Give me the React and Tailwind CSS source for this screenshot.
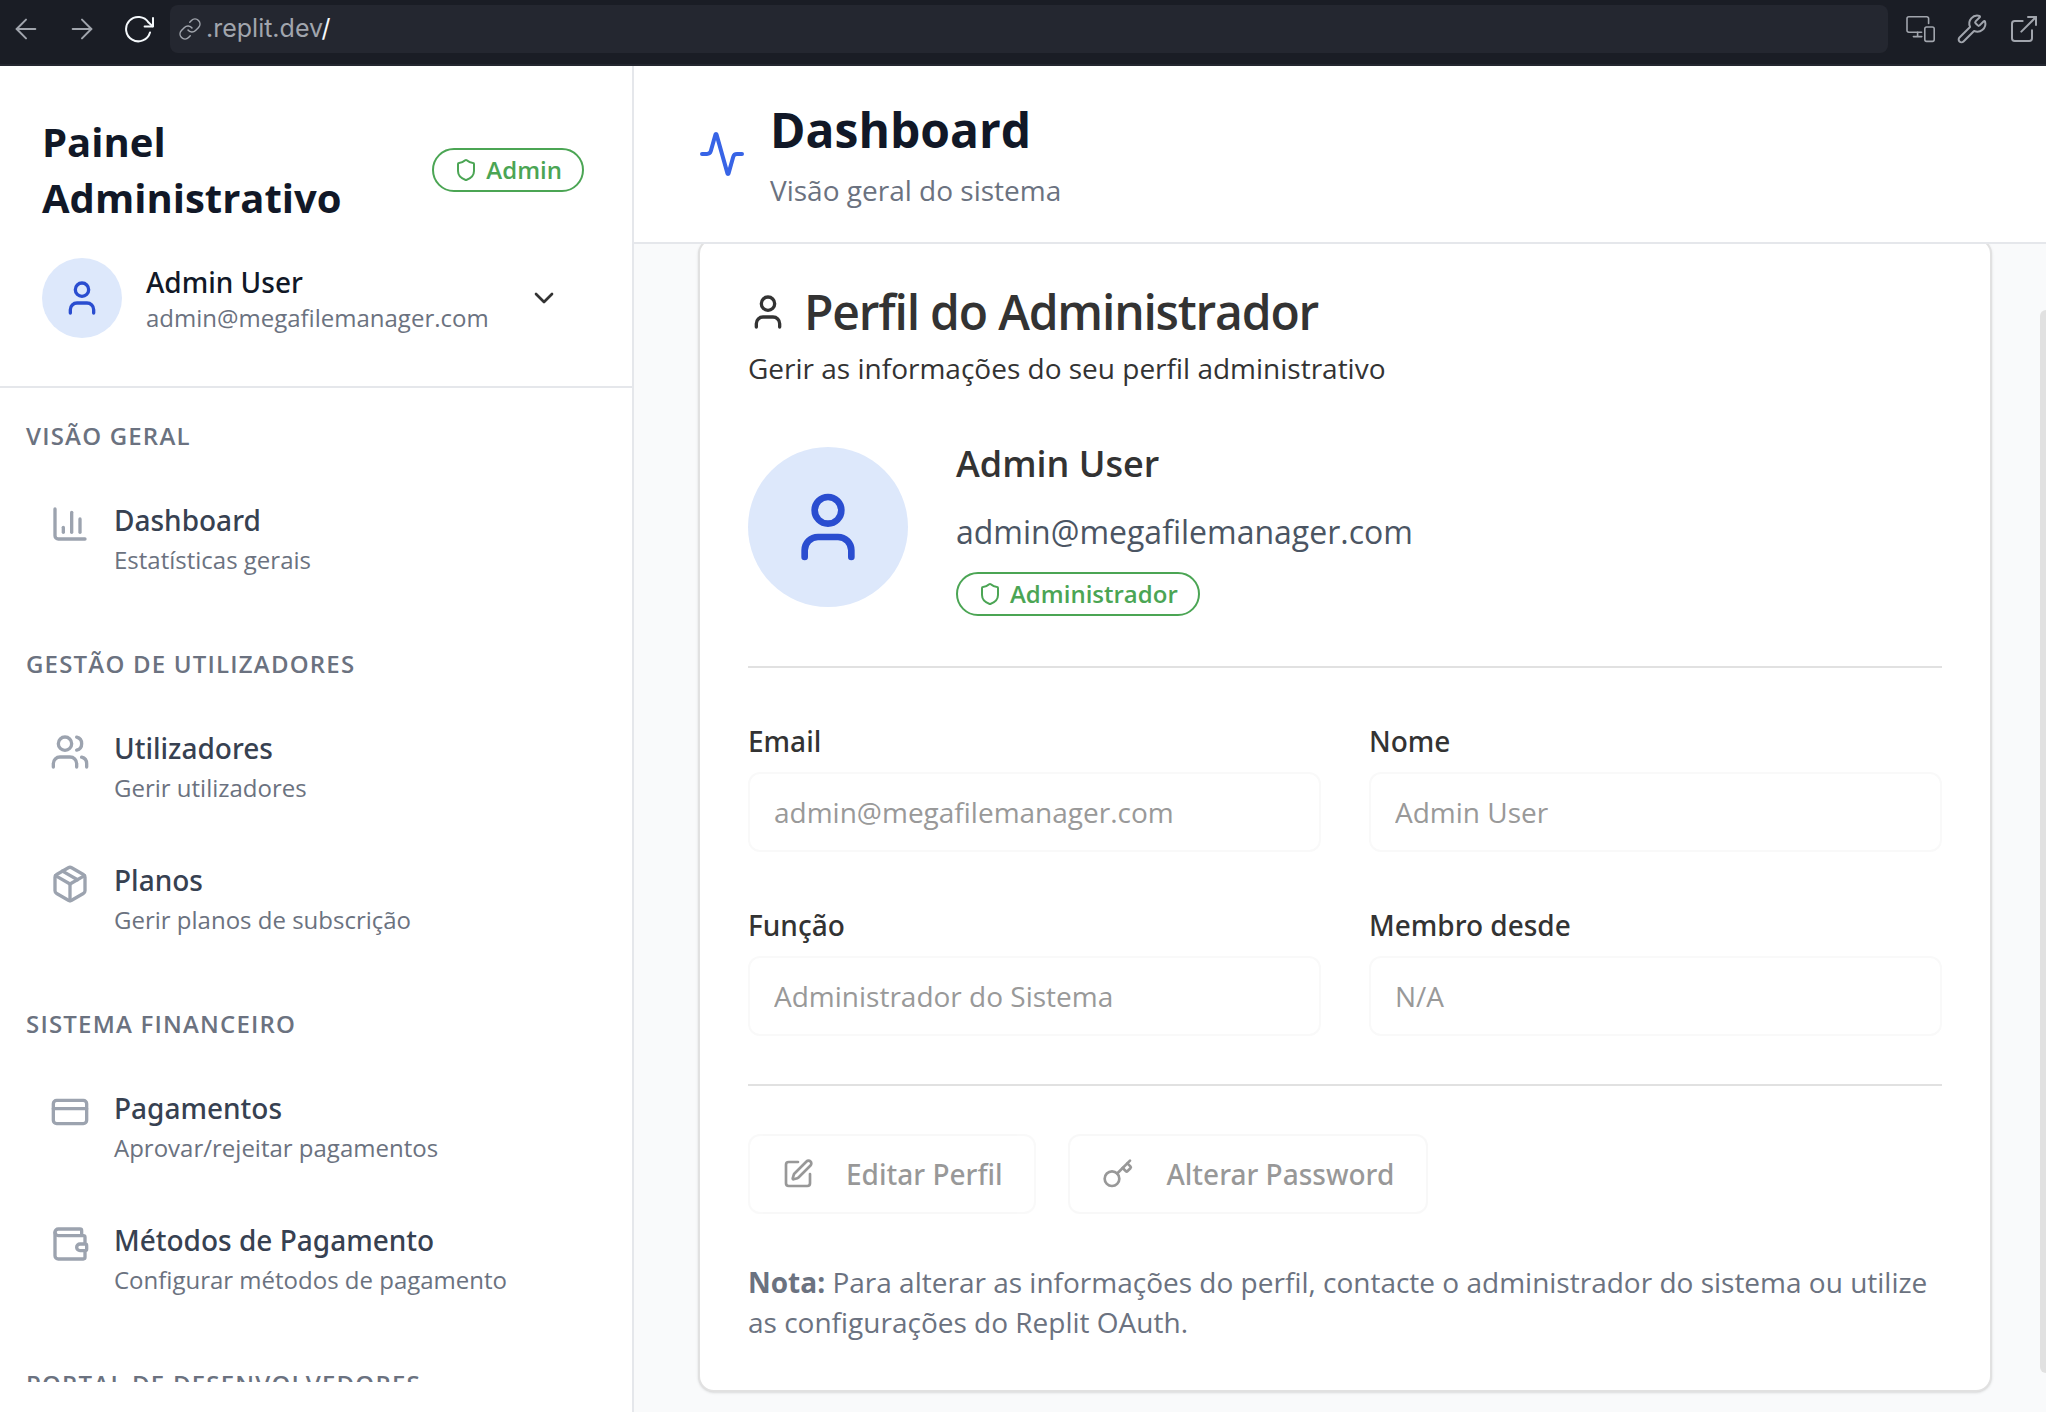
import {
  Activity,
  ArrowLeft,
  ArrowRight,
  ChartColumn,
  ChevronDown,
  CreditCard,
  ExternalLink,
  Key,
  Link,
  Package,
  Shield,
  SquarePen,
  User,
  Users,
  Wallet,
  Wrench,
} from "lucide-react";

const sections = [
  {
    title: "VISÃO GERAL",
    items: [{ icon: ChartColumn, label: "Dashboard", description: "Estatísticas gerais" }],
  },
  {
    title: "GESTÃO DE UTILIZADORES",
    items: [
      { icon: Users, label: "Utilizadores", description: "Gerir utilizadores" },
      { icon: Package, label: "Planos", description: "Gerir planos de subscrição" },
    ],
  },
  {
    title: "SISTEMA FINANCEIRO",
    items: [
      { icon: CreditCard, label: "Pagamentos", description: "Aprovar/rejeitar pagamentos" },
      { icon: Wallet, label: "Métodos de Pagamento", description: "Configurar métodos de pagamento" },
    ],
  },
  { title: "PORTAL DE DESENVOLVEDORES", items: [] },
];

const fields = [
  { id: "email", label: "Email", value: "admin@megafilemanager.com" },
  { id: "nome", label: "Nome", value: "Admin User" },
  { id: "funcao", label: "Função", value: "Administrador do Sistema" },
  { id: "membro", label: "Membro desde", value: "N/A" },
];

function ReloadIcon() {
  return (
    <svg
      viewBox="0 0 32 32"
      className="size-8"
      fill="none"
      stroke="currentColor"
      strokeWidth="2"
      strokeLinecap="round"
      strokeLinejoin="round"
      aria-hidden="true"
    >
      <path d="M28 19.5A12.2 12.2 0 1 1 26.6 9.6L30.6 13.2" />
      <path d="M31 5V13.4H22.6" />
    </svg>
  );
}

function DevicesIcon() {
  return (
    <svg
      viewBox="0 0 32 32"
      className="size-8"
      fill="none"
      stroke="currentColor"
      strokeWidth="1.6"
      strokeLinecap="round"
      strokeLinejoin="round"
      aria-hidden="true"
    >
      <path d="M24.6 10.4V5.6a1.8 1.8 0 0 0-1.8-1.8H4.8A1.8 1.8 0 0 0 3 5.6v11.8a1.8 1.8 0 0 0 1.8 1.8H17.6" />
      <path d="M13.6 19.2v4.4M9.4 23.6h8.4" />
      <rect x="20.8" y="14" width="9.4" height="14.4" rx="1.8" />
    </svg>
  );
}

function BrowserBar() {
  return (
    <div className="flex h-[66px] shrink-0 items-start border-b-2 border-[#242730] bg-[#1a1d25] pt-[5px] pr-1.5 pl-2.5 text-[#a1a5ad]">
      <div className="flex h-12 items-center gap-6">
        <button type="button" aria-label="Voltar">
          <ArrowLeft className="size-8" strokeWidth={1.5} />
        </button>
        <button type="button" aria-label="Avançar">
          <ArrowRight className="size-8" strokeWidth={1.5} />
        </button>
        <button type="button" aria-label="Recarregar" className="text-[#f5f9fc]">
          <ReloadIcon />
        </button>
      </div>
      <div className="ml-4 flex h-12 flex-1 items-center gap-1 rounded-lg bg-[#242730] px-2 font-['Inter',sans-serif] text-[25px]">
        <Link className="size-6" strokeWidth={1.5} />
        <span>
          .replit.dev<span className="text-[#f5f9fc]">/</span>
        </span>
      </div>
      <div className="ml-4 flex h-12 items-center gap-5">
        <button type="button" aria-label="Dispositivos">
          <DevicesIcon />
        </button>
        <button type="button" aria-label="Ferramentas">
          <Wrench className="size-8" strokeWidth={1.5} />
        </button>
        <button type="button" aria-label="Abrir em nova janela">
          <ExternalLink className="size-8" strokeWidth={1.5} />
        </button>
      </div>
    </div>
  );
}

function Badge({ children }) {
  return (
    <span className="inline-flex h-11 shrink-0 items-center gap-2 rounded-full border-2 border-[#4ba554] px-5 text-2xl font-semibold text-[#4ba554]">
      <Shield className="size-6" />
      {children}
    </span>
  );
}

function Sidebar() {
  return (
    <aside className="flex w-[634px] shrink-0 flex-col border-r-2 border-[#e5e7eb] bg-white pb-[30px]">
      <div className="border-b-2 border-[#e5e7eb] py-12 pr-12 pl-[42px]">
        <div className="flex items-center justify-between">
          <h2 className="w-80 text-[40px] leading-[56px] font-bold text-[#111827]">Painel Administrativo</h2>
          <Badge>Admin</Badge>
        </div>
        <button type="button" className="mt-8 flex w-full items-center gap-6 pr-6 text-left">
          <span className="flex size-20 items-center justify-center rounded-full bg-[#dde8fb] text-[#2a4dd0]">
            <User className="size-10" />
          </span>
          <span className="flex-1">
            <span className="block font-['Noto_Sans',sans-serif] text-[28px] leading-10 font-medium text-[#111827]">
              Admin User
            </span>
            <span className="block text-2xl leading-8 text-[#6b7280]">admin@megafilemanager.com</span>
          </span>
          <ChevronDown className="size-8 text-[#333]" />
        </button>
      </div>
      <nav className="flex min-h-0 flex-1 flex-col gap-12 overflow-hidden px-[26px] pt-8">
        {sections.map((section) => (
          <section key={section.title} className="shrink-0">
            <h3 className="text-2xl leading-8 font-semibold tracking-wider text-[#6b7280]">{section.title}</h3>
            <ul className="mt-6 flex flex-col gap-2">
              {section.items.map(({ icon: Icon, label, description }) => (
                <li key={label}>
                  <a href="#" className="flex items-start gap-6 p-6">
                    <Icon className="mt-1 size-10 shrink-0 text-[#9ca3af]" />
                    <span className="flex flex-col gap-1">
                      <span className="font-['Noto_Sans',sans-serif] text-[28px] leading-10 font-medium text-[#374151]">
                        {label}
                      </span>
                      <span className="text-2xl leading-8 text-[#6b7280]">{description}</span>
                    </span>
                  </a>
                </li>
              ))}
            </ul>
          </section>
        ))}
      </nav>
    </aside>
  );
}

function OutlineButton({ icon: Icon, children }) {
  return (
    <button
      type="button"
      disabled
      className="flex h-20 items-center gap-8 rounded-xl border-2 border-[#f3f3f3] px-8 font-['Noto_Sans',sans-serif] text-[28px] leading-10 font-medium text-[#333] opacity-50"
    >
      <Icon className="size-8" />
      {children}
    </button>
  );
}

function ProfileCard() {
  return (
    <section className="-mt-[6px] rounded-2xl border-2 border-[#e1e1e1] bg-white p-12 text-[#333] shadow-sm">
      <h2 className="flex items-center gap-4 text-5xl leading-none font-semibold tracking-tight">
        <User className="size-10" />
        Perfil do Administrador
      </h2>
      <p className="mt-3 text-[28px] leading-10">Gerir as informações do seu perfil administrativo</p>

      <div className="mt-12 flex items-center gap-12">
        <span className="flex size-40 shrink-0 items-center justify-center rounded-full bg-[#dde8fb] text-[#2a4dd0]">
          <User className="size-20" />
        </span>
        <div className="flex flex-col items-start gap-4 pb-0.5">
          <h3 className="text-4xl leading-[56px] font-semibold">Admin User</h3>
          <p className="text-[32px] leading-[48px] text-[#4b5563]">admin@megafilemanager.com</p>
          <Badge>Administrador</Badge>
        </div>
      </div>

      <hr className="mt-12 border-t-2 border-[#e1e1e1]" />

      <div className="mt-12 grid grid-cols-2 gap-12">
        {fields.map((field) => (
          <div key={field.id} className="flex flex-col gap-1.5">
            <label
              htmlFor={field.id}
              className="font-['Noto_Sans',sans-serif] text-[28px] leading-[50px] font-medium"
            >
              {field.label}
            </label>
            <input
              id={field.id}
              type="text"
              disabled
              defaultValue={field.value}
              className="h-20 w-full rounded-xl border-2 border-[#f9f9f9] px-6 text-[28px] leading-10 text-[#999]"
            />
          </div>
        ))}
      </div>

      <hr className="mt-12 border-t-2 border-[#e1e1e1]" />

      <div className="mt-12 flex gap-8">
        <OutlineButton icon={SquarePen}>Editar Perfil</OutlineButton>
        <OutlineButton icon={Key}>Alterar Password</OutlineButton>
      </div>

      <p className="mt-12 text-[28px] leading-10 text-[#6b7280]">
        <strong className="font-bold">Nota:</strong> Para alterar as informações do perfil, contacte o administrador do
        sistema ou utilize as configurações do Replit OAuth.
      </p>
    </section>
  );
}

export default function App() {
  return (
    <div className="flex h-screen flex-col overflow-hidden bg-white font-['Open_Sans',sans-serif]">
      <BrowserBar />
      <div className="flex min-h-0 flex-1">
        <Sidebar />
        <main className="relative flex min-w-0 flex-1 flex-col bg-[#f9fafb]">
          <header className="flex shrink-0 items-center gap-6 border-b-2 border-[#e5e7eb] bg-white px-16 py-8">
            <Activity className="size-12 text-[#3864e6]" />
            <div className="flex flex-col gap-2">
              <h1 className="text-5xl leading-[64px] font-bold text-[#111827]">Dashboard</h1>
              <p className="text-[28px] leading-10 text-[#6b7280]">Visão geral do sistema</p>
            </div>
          </header>
          <div className="min-h-0 flex-1 overflow-hidden pr-[54px] pl-16">
            <ProfileCard />
          </div>
          <div className="absolute top-[244px] right-0 bottom-[39px] w-1.5 rounded-l-md bg-[#e1e1e1]" />
        </main>
      </div>
    </div>
  );
}
